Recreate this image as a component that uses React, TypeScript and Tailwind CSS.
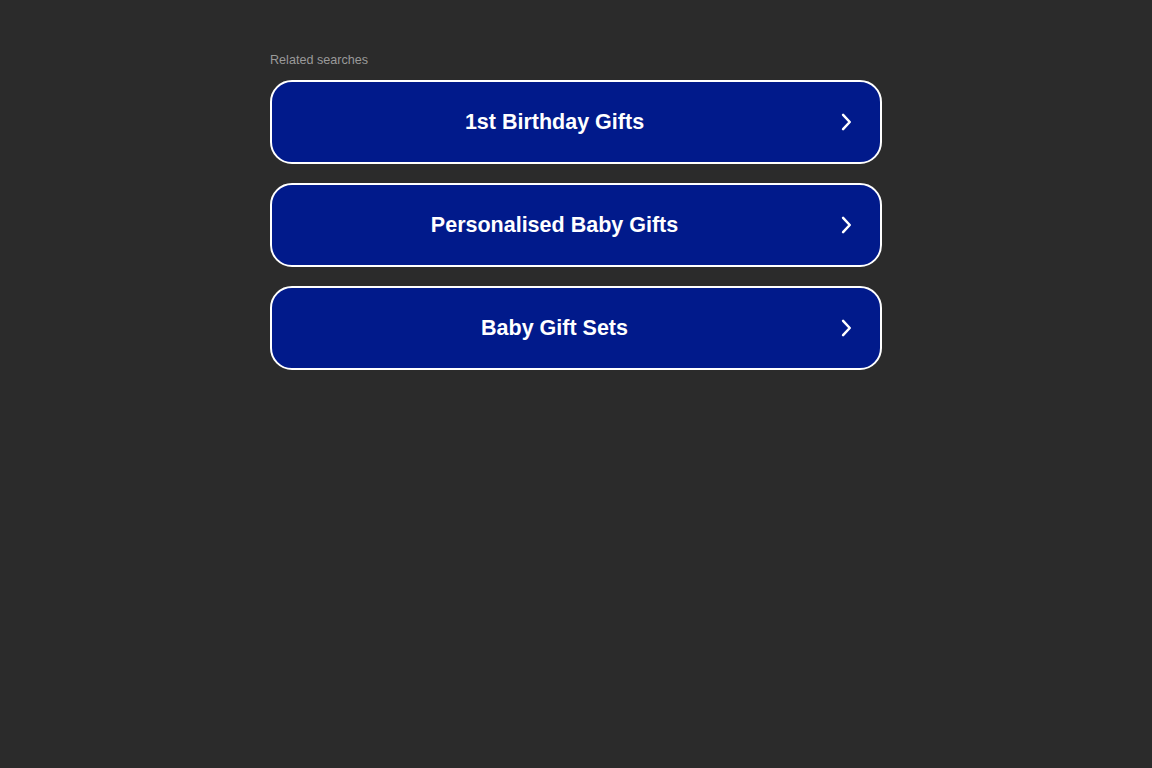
const searches = ['1st Birthday Gifts', 'Personalised Baby Gifts', 'Baby Gift Sets']

export default function App() {
  return (
    <main className="min-h-screen w-full bg-[#2b2b2b] font-['Liberation_Sans',Arial,sans-serif]">
      <div className="mx-auto w-[612px] pt-[52px]">
        <p className="text-[12.6px] leading-[16px] text-[#9a9a9a]">Related searches</p>
        <div className="mt-[12px] flex flex-col gap-[19px]">
          {searches.map((s) => (
            <a
              key={s}
              href="#"
              className="flex h-[84px] items-center rounded-[22px] border-2 border-white bg-[#011a8b] text-white"
            >
              <span className="flex-1 pl-[1px] text-center text-[21.5px] font-bold">{s}</span>
              <svg className="mr-[24px] h-[20px] w-[20px]" viewBox="0 0 24 24" fill="none" stroke="currentColor" strokeWidth={3} strokeLinecap="round" strokeLinejoin="round">
                <path d="M8.5 3.5l8 8.5-8 8.5" />
              </svg>
            </a>
          ))}
        </div>
      </div>
    </main>
  )
}
